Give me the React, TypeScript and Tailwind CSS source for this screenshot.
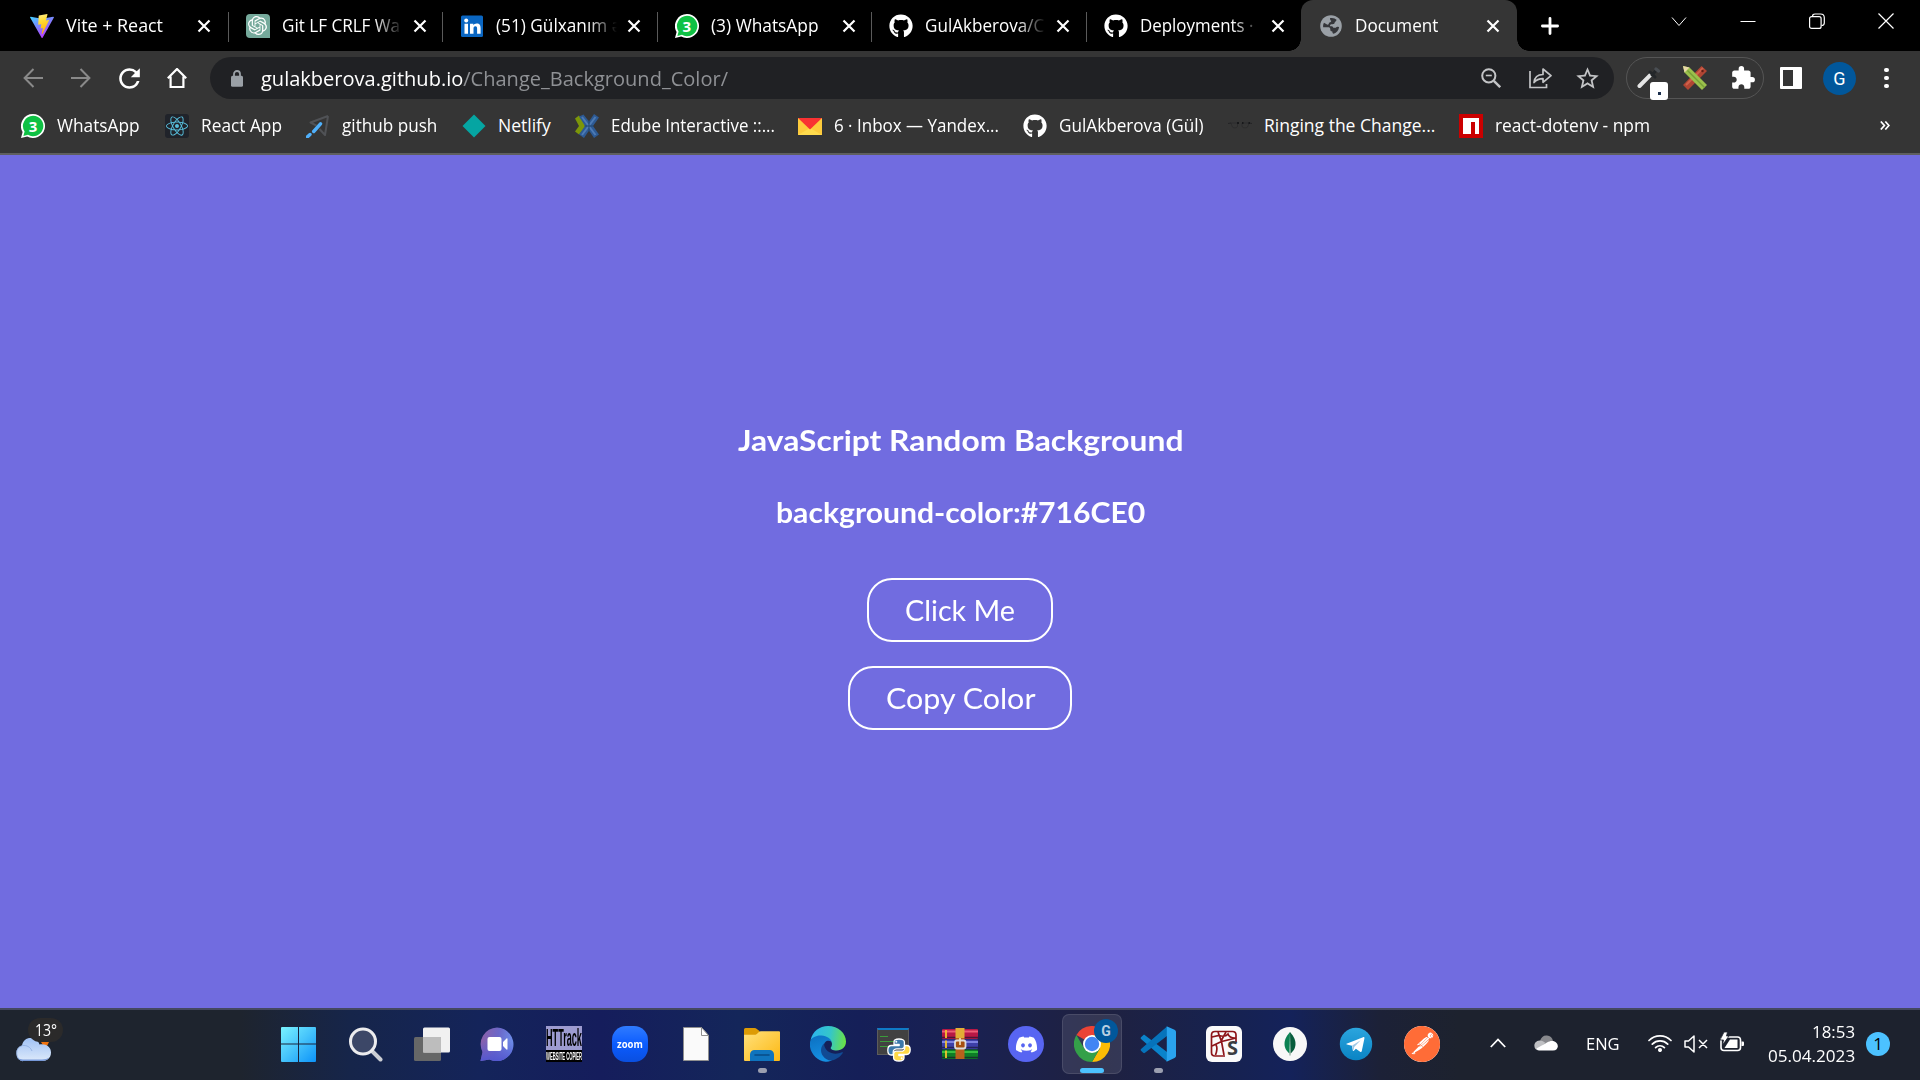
import React, { useLayoutEffect, useRef, useState } from "react";
import { FaGithub, FaDiscord, FaReact } from "react-icons/fa";
import { SiOpenai, SiPostman } from "react-icons/si";
import { MdExtension, MdRefresh, MdStarBorder } from "react-icons/md";

type Kids = { children: React.ReactNode };

/* One line of text, condensed or widened to the width of its box. */
function Fit({ children, className }: Kids & { className: string }) {
  const box = useRef<HTMLSpanElement>(null);
  const inner = useRef<HTMLSpanElement>(null);
  const [scale, setScale] = useState(1);
  useLayoutEffect(() => {
    if (box.current && inner.current) {
      setScale(box.current.offsetWidth / inner.current.offsetWidth);
    }
  }, []);
  return (
    <span ref={box} className={`block shrink-0 text-left whitespace-nowrap ${className}`}>
      <span ref={inner} className="inline-block origin-left" style={{ transform: `scaleX(${scale})` }}>
        {children}
      </span>
    </span>
  );
}

/* ---------- favicons ---------- */

const ViteIcon = () => (
  <svg viewBox="0 0 24 24" className="size-6">
    <defs>
      <linearGradient id="viteA" x1="0" y1="0" x2=".6" y2="1">
        <stop offset="0" stopColor="#41d1ff" />
        <stop offset="1" stopColor="#bd34fe" />
      </linearGradient>
      <linearGradient id="viteB" x1=".4" y1="0" x2=".6" y2="1">
        <stop offset="0" stopColor="#ffea83" />
        <stop offset=".3" stopColor="#ffdd35" />
        <stop offset="1" stopColor="#ffa800" />
      </linearGradient>
    </defs>
    <path d="M23.9 3.6 12.6 23.7a.6.6 0 0 1-1 0L.1 3.6c-.3-.5.1-1 .6-.9l11.300 2 11.100-2c.6-.1 1 .4.8.9z" fill="url(#viteA)" />
    <path d="M17.200 0 8.900 1.600a.3.3 0 0 0-.2.300l-.5 8.600c0 .2.200.4.400.3l2.300-.5c.2 0 .4.200.4.400l-.7 3.400c0 .2.200.4.400.4l1.400-.5c.3 0 .5.200.4.400l-1.100 5.300c0 .3.400.5.600.2l.1-.2 6.700-13.400c.1-.2-.1-.5-.4-.4l-2.400.5c-.2 0-.4-.2-.3-.4l1.500-5.400c.1-.3-.1-.5-.4-.4z" fill="url(#viteB)" />
  </svg>
);

const GptIcon = () => (
  <span className="flex size-6 items-center justify-center rounded-tl-[4px] rounded-tr-[4px] rounded-bl-[4px] bg-[#75a99b]">
    <SiOpenai className="size-[19px] text-white" />
  </span>
);

const LinkedinIcon = () => (
  <svg viewBox="0 0 24 24" className="size-6">
    <rect x="1" y="1.500" width="22" height="21.500" rx="1.500" fill="#0a66c2" />
    <g fill="#fff">
      <circle cx="6.200" cy="6.600" r="2" />
      <path d="M4.500 9.800H8v10H4.500zM10 9.800h3.300v1.500c.6-1.100 1.900-1.800 3.400-1.800 3.100 0 3.900 1.900 3.900 4.700v5.600h-3.500v-5c0-1.400-.2-2.500-1.700-2.500s-1.900 1.100-1.900 2.500v5H10z" />
    </g>
  </svg>
);

const WhatsappIcon = () => (
  <span className="relative block size-6">
    <svg viewBox="0 0 24 24" className="size-6">
      <path d="M12 0a12 12 0 1 1-5.800 22.500L0 24l1.600-6A12 12 0 0 1 12 0z" fill="#fff" />
      <path d="M12 1.800a10.200 10.200 0 1 1-5 19L2.400 22l1.200-4.500A10.200 10.200 0 0 1 12 1.800z" fill="#0fc144" />
    </svg>
    <span className="absolute inset-0 text-center font-['Open_Sans',sans-serif] text-[15px] leading-6 font-bold text-white">3</span>
  </span>
);

const GlobeIcon = () => (
  <svg viewBox="0 0 24 24" className="size-6">
    <circle cx="12" cy="12" r="10.800" fill="#9aa0a6" />
    <path d="M11 3.200c3-.6 5.600.2 7.400 2.200-1 .5-1 1.600-1.800 2.100-1 .6-.4 2-1.700 2.400-1.500.4-2.600-.3-3.600.6-.7.700-.4 1.700.5 1.700 1.500 0 2.500.3 2.700 1.800h2c1.500 0 1.400-1.400 2.600-1.300l1.900.3c-.3 3.500-2.800 6.700-6 7.600-1.200-.4-1.500-1.400-1.500-2.600-1.700 0-2.300-.9-2.300-2.500 0-1.300-1-2-2.300-2H3.300C3 11.500 3.400 9.800 4.200 8.400l3.900 2.200c1.500-.2 1.600-1.300 1.600-2.300 1.500 0 2.500-.8 2.600-2C11.300 6 10.700 4.300 11 3.200z" fill="#35363a" transform="translate(1.200 1.200) scale(.9)" />
  </svg>
);

const GithubIcon = () => <FaGithub className="size-6 text-white" />;

const ReactIcon = () => (
  <span className="flex size-6 items-center justify-center rounded-[3px] bg-[#20232a]">
    <FaReact className="size-[22px] text-[#61dafb]/85" />
  </span>
);

const PushIcon = () => (
  <svg viewBox="0 0 24 24" className="size-6" fill="none">
    <path d="M22 2 4.500 8.500l6 3.200M22 2l-3 19-5.500-6" stroke="#505256" strokeWidth="2" strokeLinejoin="round" />
    <path d="m14.500 9.800-6.800 7.700M4 20.500l-2.500 2.300" stroke="#4fb0fb" strokeWidth="3.400" strokeLinecap="round" />
  </svg>
);

const NetlifyIcon = () => (
  <svg viewBox="0 0 24 24" className="size-6">
    <path d="M12 .5 23.500 12 12 23.500.5 12z" fill="#05a5a2" />
  </svg>
);

const EdubeIcon = () => (
  <svg viewBox="0 0 24 24" className="size-6">
    <path d="M0 4.500 4 1.500l7 10.500-7 8.500-4-3L4 12z" fill="#7c9609" />
    <path d="m4 2.500 4.500-2L14 7.500 19 0l5 3.500L18 12l6 8.500-5 3.500-5-7.500L9 24l-5-3.500 6-8.500z" fill="#2d5a94" />
    <path d="M7 3 20.500 21M20.500 3 7 21" stroke="#4d7bb4" strokeWidth="2" />
    <path d="M14 6v12M9.500 12h9" stroke="#23466f" strokeWidth="1" />
  </svg>
);

const YandexIcon = () => (
  <svg viewBox="0 0 24 24" className="size-6">
    <path d="M0 4h24v17H0z" fill="#fdcb3c" />
    <path d="m0 21 12-7 12 7z" fill="#ffdb4d" />
    <path d="M0 4h24L12 15.500z" fill="#f93232" />
  </svg>
);

const GlassesIcon = () => (
  <svg viewBox="0 0 24 24" className="size-6" fill="none" stroke="#17181a">
    <path d="M0 9.500 3 9M21 9l3 .5" strokeWidth="1" opacity=".6" />
    <path d="M3 9h6.500v3c0 2.500-5.500 2.500-5.500 0zM14 9h7l-1 3c0 2.500-6 2.500-6 0z" strokeWidth=".6" opacity=".5" />
    <path d="M9 9h2M14 9h1.500M20.500 9H22" strokeWidth="1.800" />
  </svg>
);

const NpmIcon = () => (
  <svg viewBox="0 0 24 24" className="size-6">
    <path d="M0 0h24v24H0z" fill="#cb0000" />
    <path d="M4 4h16v16h-4V8h-4v12H4z" fill="#fff" />
  </svg>
);

/* ---------- tab strip ---------- */

const CloseX = () => (
  <svg viewBox="0 0 14 14" className="size-3.5" stroke="#fff" strokeWidth="2.200">
    <path d="m1.500 1.500 11 11M12.500 1.500l-11 11" />
  </svg>
);

type TabData = { icon: React.ReactNode; title: string; width: string; faded?: boolean };

const tabs: TabData[] = [
  { icon: <ViteIcon />, title: "Vite + React", width: "w-[97px]" },
  { icon: <GptIcon />, title: "Git LF CRLF Wa", width: "w-[118px]", faded: true },
  { icon: <LinkedinIcon />, title: "(51) Gülxanım ə", width: "w-[125px]", faded: true },
  { icon: <WhatsappIcon />, title: "(3) WhatsApp", width: "w-[108px]" },
  { icon: <GithubIcon />, title: "GulAkberova/C", width: "w-[119px]", faded: true },
  { icon: <GithubIcon />, title: "Deployments ·", width: "w-[113px]", faded: true },
];

function TabBody({ icon, title, width, faded }: TabData) {
  return (
    <>
      {icon}
      <div className={faded ? "mb-px ml-3 w-[121px] overflow-hidden [mask-image:linear-gradient(to_right,black_76%,transparent_100%)]" : "mb-px ml-3 w-[121px]"}>
        <Fit className={width}>{title}</Fit>
      </div>
      <div className="ml-2.5">
        <CloseX />
      </div>
    </>
  );
}

function TabStrip() {
  return (
    <div className="flex h-[51px] bg-black pl-[13px] text-[17.500px] leading-6 text-white">
      {tabs.map((t, i) => (
        <div key={t.title} className="relative flex w-[214.6px] shrink-0 items-center pl-[18px] first:pl-[17px]">
          {i > 0 && <div className="absolute top-3 left-0 h-[30px] w-px bg-[#5a5a5a]" />}
          <TabBody {...t} />
        </div>
      ))}
      <div className="relative flex w-[216px] shrink-0 items-center rounded-t-[12px] bg-[#353535] pl-[18px]">
        <div className="absolute bottom-0 -left-3 size-3 bg-[radial-gradient(circle_at_0_0,transparent_11.5px,#353535_12px)]" />
        <div className="absolute -right-3 bottom-0 size-3 bg-[radial-gradient(circle_at_100%_0,transparent_11.5px,#353535_12px)]" />
        <TabBody icon={<GlobeIcon />} title="Document" width="w-[83px]" />
      </div>
      <svg viewBox="0 0 18 18" className="mt-[17px] ml-[24px] size-[18px]" stroke="#fff" strokeWidth="2.800" strokeLinecap="round">
        <path d="M9 1.400v15.200M1.400 9h15.200" />
      </svg>
      <div className="mt-[13px] mr-[26px] ml-auto flex gap-[53px]">
        <svg viewBox="0 0 16 16" className="size-4" fill="none" stroke="#fff">
          <path d="m1 4.500 7 8 7-8" />
        </svg>
        <svg viewBox="0 0 16 16" className="size-4" stroke="#fff">
          <path d="M.5 8.500h15" />
        </svg>
        <svg viewBox="0 0 16 16" className="size-4" fill="none" stroke="#fff" strokeWidth="1.200">
          <rect x=".6" y="3.600" width="11.500" height="11.800" rx="2" />
          <path d="M3.500 3.500C3.500 1.500 4.500 1 6 1h5.500c3 0 3.800 1.500 3.800 3.800V10c0 1.800-.8 2.500-2.800 2.500" />
        </svg>
        <svg viewBox="0 0 16 16" className="size-4" stroke="#fff" strokeWidth="1.200">
          <path d="m.5.5 15 15M15.500.5l-15 15" />
        </svg>
      </div>
    </div>
  );
}

/* ---------- toolbar ---------- */

const ArrowIcon = ({ flip }: { flip?: boolean }) => (
  <svg viewBox="0 0 20 20" className={flip ? "size-5 -scale-x-100" : "size-5"} fill="none" stroke="#8a8a8a" strokeWidth="2">
    <path d="M20 10H2M10.500 1 1.600 10l8.900 9" />
  </svg>
);

function Toolbar() {
  return (
    <div className="flex h-[54px] items-center bg-[#353535] pl-[23px]">
      <ArrowIcon />
      <div className="ml-7">
        <ArrowIcon flip />
      </div>
      <MdRefresh className="ml-[23px] size-[31px] text-white" />
      <svg viewBox="0 0 20 20" className="ml-[22px] size-5" fill="none" stroke="#fff" strokeWidth="2.200">
        <path d="M.8 10.200 10 1l9.200 9.200M3.600 8.500V19h12.800V8.500" />
      </svg>

      <div className="ml-[23px] flex h-[42px] w-[1404px] items-center rounded-full bg-[#202124] pl-[21px]">
        <svg viewBox="0 0 12 17" className="h-[17px] w-3">
          <path d="M3 7V4a3 3 0 0 1 6 0v3" fill="none" stroke="#9aa0a6" strokeWidth="1.800" />
          <rect y="5.800" width="12" height="11" rx="1.500" fill="#9aa0a6" />
        </svg>
        <div className="mb-px ml-[18px] text-[20.500px] leading-[28px]">
          <Fit className="w-[467px] text-[#8f9195]">
            <span className="text-white">gulakberova.github.io</span>/Change_Background_Color/
          </Fit>
        </div>
        <svg viewBox="0 0 20 20" className="mr-[28px] ml-auto size-5" fill="none" stroke="#c3c4c6" strokeWidth="2">
          <circle cx="7.800" cy="7.800" r="6.600" />
          <path d="m12.800 12.800 6.400 6.400" strokeWidth="2.400" />
          <path d="M4.800 7.500h6" strokeWidth="1.600" />
        </svg>
        <svg viewBox="0 0 23 22" className="mr-[22px] h-[22px] w-[23px]" fill="none" stroke="#c3c4c6" strokeWidth="1.700">
          <path d="M1 4v16.500h16.500V17" />
          <path d="M5 15.500c.5-5 3.500-8 9-8V2l8 6.700-8 6.600v-3.700c-4 0-6.500.8-9 3.900z" strokeLinejoin="round" />
        </svg>
        <MdStarBorder className="mr-[13px] size-[27px] text-[#c3c4c6]" />
      </div>

      <div className="relative ml-3 flex h-[42px] w-[138px] items-center rounded-full border border-[#555] pl-2.5">
        <svg viewBox="0 0 24 24" className="size-6">
          <path d="M2.500 20 13.500 8.800" stroke="#e5e5e5" strokeWidth="4" strokeLinecap="round" />
          <path d="m13 6 5 5M15 9l4.500-5" stroke="#24272a" strokeWidth="3" strokeLinecap="round" />
          <path d="m19 3 2.500 2" stroke="#4a4e53" strokeWidth="3.500" strokeLinecap="round" />
        </svg>
        <svg viewBox="0 0 24 24" className="ml-[22px] size-6">
          <path d="M0 19 18.500 0 24 5 5 24z" fill="#b04533" />
          <path d="m3 19 17-17" stroke="#d0604b" strokeWidth="2" />
          <circle cx="19.500" cy="5" r="1.200" fill="#611d15" />
          <path d="M0 0 6.500 1.500 24 19l-5 5L1.500 6.500z" fill="#9bc04c" />
          <path d="m4.500 4.500 17 17" stroke="#77a035" strokeWidth="1.500" />
          <path d="m0 0 6.500 1.500-5 5z" fill="#e9d8a8" />
        </svg>
        <MdExtension className="ml-[23px] size-[26px] text-white" />
        <div className="absolute top-6 left-[23px] flex h-[18px] w-[18px] items-center justify-center rounded-[3px] bg-white">
          <div className="mt-1 size-[3px] bg-[#1b2f4d]" />
        </div>
      </div>

      <div className="ml-4 flex h-[22px] w-[22px] rounded-[1px] border-[3px] border-white">
        <div className="ml-auto w-[6px] bg-white" />
      </div>
      <div className="ml-[21px] flex size-[33px] items-center justify-center rounded-full bg-[#01579b] font-['Roboto',sans-serif] text-[18px] text-white">
        G
      </div>
      <div className="ml-[28px] flex flex-col gap-[3.500px]">
        <div className="size-[4.500px] rounded-full bg-white" />
        <div className="size-[4.500px] rounded-full bg-white" />
        <div className="size-[4.500px] rounded-full bg-white" />
      </div>
    </div>
  );
}

/* ---------- bookmarks ---------- */

const bookmarks = [
  { icon: <WhatsappIcon />, title: "WhatsApp", width: "w-[83px]", slot: "w-[144px]" },
  { icon: <ReactIcon />, title: "React App", width: "w-[81px]", slot: "w-[141px]" },
  { icon: <PushIcon />, title: "github push", width: "w-[95px]", slot: "w-[156px]" },
  { icon: <NetlifyIcon />, title: "Netlify", width: "w-[53px]", slot: "w-[113px]" },
  { icon: <EdubeIcon />, title: "Edube Interactive ::...", width: "w-[164px]", slot: "w-[223px]" },
  { icon: <YandexIcon />, title: "6 · Inbox — Yandex...", width: "w-[165px]", slot: "w-[225px]" },
  { icon: <GithubIcon />, title: "GulAkberova (Gül)", width: "w-[145px]", slot: "w-[205px]" },
  { icon: <GlassesIcon />, title: "Ringing the Change...", width: "w-[171px]", slot: "w-[231px]" },
  { icon: <NpmIcon />, title: "react-dotenv - npm", width: "w-[155px]", slot: "w-[216px]" },
];

function Bookmarks() {
  return (
    <div className="flex h-[50px] items-center border-b-2 border-[#5f5f5f] bg-[#353535] pb-[7px] pl-[21px] text-[17.500px] leading-6 text-white">
      {bookmarks.map((b) => (
        <div key={b.title} className={`flex shrink-0 items-center gap-3 ${b.slot}`}>
          {b.icon}
          <div className="mb-px">
            <Fit className={b.width}>{b.title}</Fit>
          </div>
        </div>
      ))}
      <svg viewBox="0 0 10 9" className="mr-[30px] ml-auto h-[9px] w-[10px]" fill="none" stroke="#fff" strokeWidth="1.700">
        <path d="m.8.500 3.600 4-3.600 4M5.300.500l3.600 4-3.600 4" />
      </svg>
    </div>
  );
}

/* ---------- taskbar ---------- */

const Start = () => (
  <svg viewBox="0 0 36 36" className="size-9 -translate-x-0.5">
    <defs>
      <linearGradient id="win" gradientUnits="userSpaceOnUse" x1="1" y1="1" x2="36" y2="36">
        <stop offset="0" stopColor="#7af3ff" />
        <stop offset=".5" stopColor="#46c4fb" />
        <stop offset="1" stopColor="#0c93f9" />
      </linearGradient>
    </defs>
    <path d="M2 1h16v16.500H1V2a1 1 0 0 1 1-1zM19 1h16a1 1 0 0 1 1 1v15.500H19zM1 18.500h17V36H2a1 1 0 0 1-1-1zM19 18.500h17V35a1 1 0 0 1-1 1H19z" fill="url(#win)" />
  </svg>
);

const Search = () => (
  <svg viewBox="0 0 36 36" className="size-9 -translate-x-px">
    <path d="m25 25 8.500 8.500" stroke="#ccced4" strokeWidth="4" strokeLinecap="round" />
    <circle cx="16" cy="15.500" r="12.500" fill="#3c4767" stroke="#ececee" strokeWidth="3" />
  </svg>
);

const TaskView = () => (
  <svg viewBox="0 0 36 36" className="size-9">
    <rect x="0" y="11" width="27" height="24" rx="1.500" fill="#666767" />
    <rect x="9" y="1.500" width="27" height="25" rx="1.500" fill="#f1f1f1" />
    <path d="M9 11h18v15.500H9z" fill="#bdbdbd" />
  </svg>
);

const Chat = () => (
  <svg viewBox="0 0 36 36" className="size-9 -translate-x-px">
    <defs>
      <linearGradient id="chat" x1="0" y1=".3" x2="1" y2=".5">
        <stop offset="0" stopColor="#8c5fa8" />
        <stop offset=".5" stopColor="#6b67c8" />
        <stop offset="1" stopColor="#6d90ec" />
      </linearGradient>
      <linearGradient id="chatB" x1="0" y1="0" x2="0" y2="1">
        <stop offset=".4" stopColor="#5b5bd0" stopOpacity="0" />
        <stop offset="1" stopColor="#5357cf" />
      </linearGradient>
    </defs>
    <path d="M18 1.500a16.800 16.800 0 1 1-7.500 32L1.500 35l2-9A16.800 16.800 0 0 1 18 1.500z" fill="url(#chat)" />
    <path d="M18 1.500a16.800 16.800 0 1 1-7.500 32L1.500 35l2-9A16.800 16.800 0 0 1 18 1.500z" fill="url(#chatB)" />
    <rect x="8.500" y="11" width="14" height="14" rx="2" fill="#fff" />
    <path d="m24 16 3.500-3.500c.6-.6 1-.3 1 .4v10.200c0 .7-.4 1-1 .4L24 20z" fill="#fff" />
  </svg>
);

const Httrack = () => (
  <div className="flex size-9 flex-col overflow-hidden bg-[#9d9bd0]">
    <div className="h-6 text-center font-['Liberation_Sans',sans-serif] text-black">
      <Fit className="w-9 text-[23px] leading-6 font-bold">HTTrack</Fit>
    </div>
    <div className="h-3 bg-black font-['Liberation_Sans',sans-serif] text-white">
      <Fit className="w-9 text-[11px] leading-3 font-bold">WEBSITE COPIER</Fit>
    </div>
  </div>
);

const Zoom = () => (
  <div className="flex size-9 items-center justify-center rounded-[14px] bg-gradient-to-b from-[#2f7bff] via-[#0b5cff] to-[#0a4fe0] pb-px font-['Open_Sans',sans-serif] text-white">
    <Fit className="w-[26px] text-[11px] leading-3 font-bold">zoom</Fit>
  </div>
);

const FileIcon = () => (
  <svg viewBox="0 0 36 36" className="size-9">
    <path d="M5.500 1.500h18l7 8v25h-25z" fill="#fafafa" stroke="#8f8f8f" />
    <path d="M23.500 1.500v8h7z" fill="#fff" stroke="#8f8f8f" />
  </svg>
);

const Folder = () => (
  <svg viewBox="0 0 36 36" className="size-9">
    <defs>
      <linearGradient id="fold" x1="0" y1="0" x2="1" y2="1">
        <stop offset="0" stopColor="#ffe17c" />
        <stop offset="1" stopColor="#fdb812" />
      </linearGradient>
    </defs>
    <path d="M0 3.500A1.500 1.500 0 0 1 1.500 2h9c1 0 1.700.3 2.300 1L15.500 5v5H0z" fill="#dd9b05" />
    <path d="M0 8.800h10.500c1.300 0 2-.4 2.900-1.300l1.300-1.300c.6-.6 1.200-.9 2.200-.9H35a1 1 0 0 1 1 1V34a1 1 0 0 1-1 1H1a1 1 0 0 1-1-1z" fill="url(#fold)" />
    <path d="M6 35v-6.500a4.500 4.500 0 0 1 4.500-4.500h15a4.500 4.500 0 0 1 4.500 4.500V35z" fill="#0f74be" />
    <path d="M11 29h14" stroke="#084b86" strokeWidth="1.600" strokeLinecap="round" />
  </svg>
);

const Edge = () => (
  <svg viewBox="0 0 36 36" className="size-9">
    <defs>
      <linearGradient id="edgeA" x1="0" y1=".4" x2="1" y2=".5">
        <stop offset="0" stopColor="#2bb4ee" />
        <stop offset=".55" stopColor="#35c6c8" />
        <stop offset="1" stopColor="#6ae245" />
      </linearGradient>
      <linearGradient id="edgeB" x1="0" y1="0" x2=".3" y2="1">
        <stop offset="0" stopColor="#0c6fc0" />
        <stop offset="1" stopColor="#1590e3" />
      </linearGradient>
    </defs>
    <path d="M.6 14C2.500 5.500 9.500 0 18 0c10.500 0 18 7.500 18 15.500 0 5.500-4 9-9.300 9-4.200 0-6-1.500-6-2.500 0-.8 1.300-1.500 1.300-4 0-3.500-4-7-9.500-7C6.500 11 2 13 .6 14z" fill="url(#edgeA)" />
    <path d="M.4 14.500C2 11.500 6.500 9 11.500 9.500c5.500.5 9.700 3.500 10.300 6.500-3-2.500-8-1.500-8 4.500 0 7 5.500 11.500 11 11.200C22 34.500 19 36.200 15.500 35.800 6.500 35-1.500 26-.0 16z" fill="url(#edgeB)" />
    <path d="M14 17.500c-3.500 3-4 8.500-1 12.500 3 4.300 8 5.600 12 3.500 3-1.300 6-3.500 7.800-6.500.4-.7-.2-1-.8-.7-6.500 3.200-17.500 1.200-18-8.800z" fill="#114a93" />
  </svg>
);

const PythonIdle = () => (
  <div className="relative size-9">
    <div className="ml-px h-[27px] w-8 translate-y-0.5 border border-[#5c5c5c] border-t-2 border-t-[#0f7ac6] bg-[#414141] pt-[6px] pl-[2px]">
      <div className="h-px w-2 bg-[#3b9b3b]" />
      <div className="mt-[4px] h-px w-4 bg-[#3b9b3b]" />
      <div className="mt-[4px] h-px w-3 bg-[#3b9b3b]" />
    </div>
    <svg viewBox="0 0 24 24" className="absolute top-3 left-[11px] size-6">
      <g stroke="#fff" strokeWidth="1.300" strokeLinejoin="round">
        <path d="M11.900 1C8.500 1 7 2 7 4v2.500h5.200v1H4.500C2 7.500.8 9.500.8 12.200S2 17 4.200 17h2v-2.700c0-2 1.600-3.500 3.500-3.500h5c1.600 0 2.700-1.300 2.700-2.800V4c0-2-2-3-5.500-3z" fill="#3c78aa" />
        <path d="M12.100 23c3.400 0 4.900-1 4.900-3v-2.500h-5.200v-1h7.700c2.500 0 3.700-2 3.700-4.700S22 7.500 19.800 7.500h-2v2.200c0 2-1.600 3.500-3.500 3.500h-5c-1.600 0-2.700 1.300-2.700 2.800v4c0 2 2 3 5.500 3z" fill="#ffd845" />
      </g>
      <circle cx="9.300" cy="3.800" r="1" fill="#fff" />
      <circle cx="14.700" cy="20.200" r="1" fill="#fff" />
    </svg>
  </div>
);

const Winrar = () => (
  <svg viewBox="0 0 36 36" className="size-9">
    <rect y="3" width="36" height="10" rx="1" fill="#b71845" />
    <rect y="13.500" width="36" height="9.500" rx="1" fill="#3d3fa8" />
    <rect y="23.500" width="36" height="9.500" rx="1" fill="#0d7d26" />
    <path d="M0 5.500h36" stroke="#ed5d76" strokeWidth="2" />
    <path d="M0 16h36" stroke="#7d82e0" strokeWidth="2" />
    <path d="M0 26h36" stroke="#36bd42" strokeWidth="2" />
    <path d="M0 11.500h36M0 21.500h36M0 31.500h36" stroke="#17142c" strokeWidth="1.500" opacity=".65" />
    <path d="M4 4v8M4 14.500v7.500M4 24.500v7.500" stroke="#f4c32e" strokeWidth="1.800" />
    <path d="M13.500 2h9v10h-9z" fill="#e2ae35" />
    <path d="M13.500 12h9v21h-9z" fill="#b6611c" />
    <rect x="13" y="14.500" width="10.500" height="8" rx="2" fill="#a65010" stroke="#dcdcdc" strokeWidth="1.800" />
    <path d="M18 12v7" stroke="#f2e4c0" strokeWidth="1.600" />
  </svg>
);

const Discord = () => (
  <div className="flex size-9 items-center justify-center rounded-full bg-[#5865f2]">
    <FaDiscord className="size-[23px] text-white" />
  </div>
);

const Chrome = () => (
  <div className="relative size-9">
    <svg viewBox="0 0 36 36" className="size-9">
      <path d="M18 18 2.400 9A18 18 0 0 1 33.600 9z" fill="#ea4335" />
      <path d="M18 9h15.600A18 18 0 0 1 18 36l7.800-13.500z" fill="#fbbc05" />
      <path d="m25.800 22.500-7.800 13.500A18 18 0 0 1 2.400 9l7.800 13.500z" fill="#34a049" />
      <circle cx="18" cy="18" r="9" fill="#fff" />
      <circle cx="18" cy="18" r="7.200" fill="#4285f4" />
    </svg>
    <div className="absolute -top-[7px] left-5 flex size-6 items-center justify-center rounded-full bg-[#01579b] font-['Roboto',sans-serif] text-[14px] font-bold text-[#b9cfe2]">
      G
    </div>
  </div>
);

const VsCode = () => (
  <svg viewBox="0 0 36 36" className="size-9">
    <path d="M1 11.300 3.200 9.200c.5-.4 1.200-.5 1.800 0L27 26v9.500L1 13c-.5-.5-.5-1.200 0-1.700z" fill="#0a83cb" />
    <path d="m1 24.700 2.200 2.100c.5.400 1.200.5 1.800 0L27 10V.4L1 23c-.5.500-.5 1.200 0 1.700z" fill="#0673bb" />
    <path d="M26 0c.6 0 .8.500.8 1v34c0 .5-.3 1-.8 1l8.500-4c1-.5 1.500-1.200 1.500-2.200V6.200C36 5.200 35.500 4.300 34.500 3.800z" fill="#2aa3ee" />
  </svg>
);

const Spyder = () => (
  <div className="relative size-9 rounded-[6px] bg-[#fafafa]">
    <svg viewBox="0 0 36 36" className="size-9" fill="none" stroke="#8d1519" strokeWidth="1.700">
      <path d="M19 30H9c-2.500 0-3.500-1-3.500-3.500V9c0-2.500 1-3.500 3.500-3.500h17.500c2.500 0 3.500 1 3.500 3.500v7" />
      <path d="M12 6l3.500 9.500L30 12M15.500 15.500 6 20M15.500 15.500 18 29M20 6l-5 9M6 11l7-1.500c3 1 7 1 9-1.500 1 3 4 4 7 4M10 19c2 3 1 6-.5 10" />
    </svg>
    <span className="absolute right-1 bottom-0.5 font-['Open_Sans',sans-serif] text-[20px] leading-6 font-bold text-[#3b3d40]">S</span>
  </div>
);

const Mongo = () => (
  <svg viewBox="0 0 36 36" className="size-9">
    <circle cx="18" cy="18" r="17" fill="#f7f7f7" />
    <path d="M18 6c-4 4.500-5.500 8-5.500 12 0 4.500 2.500 7.500 5 9.500z" fill="#0b8152" />
    <path d="M18 6c4 4.500 5.500 8 5.500 12 0 4.500-2.500 7.500-5 9.500z" fill="#075c3c" />
    <path d="M18 25v4.500" stroke="#739b88" strokeWidth="1" />
  </svg>
);

const Telegram = () => (
  <svg viewBox="0 0 36 36" className="size-9">
    <defs>
      <linearGradient id="tg" x1="0" y1="0" x2="0" y2="1">
        <stop offset="0" stopColor="#2ba5de" />
        <stop offset="1" stopColor="#0a84c4" />
      </linearGradient>
    </defs>
    <circle cx="18" cy="18" r="16.200" fill="url(#tg)" />
    <path d="m8.500 17.700 16.600-6.500c.9-.3 1.500.2 1.300 1.300l-2.600 12.600c-.2 1-.9 1.200-1.700.7l-4.200-3-2 2c-.5.500-1 .4-1.100-.3l-.8-4.800-5-1.300c-.9-.1-.9-.4-.5-.7z" fill="#fff" />
    <path d="m14.200 19.500 8.500-5.300-6.500 6.700-.7 3.800z" fill="#9fc9e6" />
  </svg>
);

const Postman = () => (
  <div className="flex size-9 items-center justify-center rounded-full bg-white">
    <SiPostman className="size-9 text-[#ff6c37]" />
  </div>
);

const apps = [
  { name: "start", icon: <Start /> },
  { name: "search", icon: <Search /> },
  { name: "taskview", icon: <TaskView /> },
  { name: "chat", icon: <Chat /> },
  { name: "httrack", icon: <Httrack /> },
  { name: "zoom", icon: <Zoom /> },
  { name: "file", icon: <FileIcon /> },
  { name: "folder", icon: <Folder />, running: true },
  { name: "edge", icon: <Edge /> },
  { name: "python", icon: <PythonIdle /> },
  { name: "winrar", icon: <Winrar /> },
  { name: "discord", icon: <Discord /> },
  { name: "chrome", icon: <Chrome />, active: true },
  { name: "vscode", icon: <VsCode />, running: true },
  { name: "spyder", icon: <Spyder /> },
  { name: "mongo", icon: <Mongo /> },
  { name: "telegram", icon: <Telegram /> },
  { name: "postman", icon: <Postman /> },
];

function Taskbar() {
  return (
    <div className="flex h-[72px] items-center border-t-2 border-[#444860] bg-[linear-gradient(90deg,#1e242e_0,#1e242e_240px,#16254a_350px,#14245a_480px,#151d5c_600px,#14265a_740px,#151f58_860px,#1a2150_980px,#1f2140_1100px,#17224f_1220px,#14225a_1290px,#1c2137_1380px,#1d222e_1460px)] text-[17px] text-white">
      <div className="relative h-full w-[267px]">
        <svg viewBox="0 0 36 28" className="absolute top-6 left-[15px] h-7 w-9">
          <defs>
            <linearGradient id="cloud" x1="0" y1="0" x2="0" y2="1">
              <stop offset="0" stopColor="#9fc1f5" />
              <stop offset="1" stopColor="#dce9fa" />
            </linearGradient>
          </defs>
          <path d="M26 8h8l-2 4-3 1z" fill="#f0730f" />
          <path d="M8 27a8 8 0 0 1-1-15.500C8 6 12 3.500 16.500 4c4 .4 7 3 8 6.500C31 9.500 36 13 36 18.500S32 27 27 27z" fill="url(#cloud)" />
          <path d="M8 27a8 8 0 0 1-.5-15.500c4-.5 8 1.500 9.500 5.500" fill="none" stroke="#8cabe0" strokeWidth=".8" />
          <path d="M2 23.500c1.500 2.300 3.500 3.500 6 3.500h19c3.500 0 6-1.200 7.500-3.500-2 1.300-4.500 2-7.500 2H8c-2.500 0-4.500-.7-6-2z" fill="#7698d8" />
        </svg>
        <div className="absolute top-2 left-[28px] flex h-6 w-[35px] items-center justify-center rounded-full bg-[#2b2a2a] text-[16px]">
          <Fit className="w-[22px] leading-5">13°</Fit>
        </div>
      </div>
      <div className="flex h-full">
        {apps.map((a) => (
          <div key={a.name} className="flex h-full w-[66px] justify-center">
            <div
              className={
                a.active
                  ? "relative mt-1 flex h-[60px] w-[60px] justify-center rounded-[7px] border border-white/10 bg-white/10 pt-[11px]"
                  : "relative mt-1 flex h-[60px] w-[60px] justify-center pt-3"
              }
            >
              {a.icon}
              {a.running && <div className="absolute bottom-px left-[25.500px] h-[5px] w-[9px] rounded-full bg-[#9b9fb0]" />}
              {a.active && <div className="absolute bottom-0 left-[17px] h-[5px] w-6 rounded-full bg-[#4cc2ff]" />}
            </div>
          </div>
        ))}
      </div>
      <svg viewBox="0 0 16 10" className="mb-1 ml-[35px] h-[10px] w-4" fill="none" stroke="#fff" strokeWidth="1.800">
        <path d="m.8 9 7.200-7.500L15.200 9" />
      </svg>
      <svg viewBox="0 0 24 16" className="mb-1 ml-[28px] h-4 w-6">
        <path d="M6 6c1-4 4-6 7-5.500 3 .3 5.500 2 6 5.500L12 9z" fill="#88898d" />
        <path d="M5 15.500C-1.500 15-1 6 5.500 5.500c3 0 4 1 6 2.500L4 15z" fill="#bfc0c3" />
        <path d="M2.500 13.500 13 7.500c2-1 3-1.500 5-1.500 7 0 8 9.500 1 9.500H6c-1.500 0-3-.5-3.500-2z" fill="#fff" />
      </svg>
      <Fit className="mb-0.5 ml-[28px] w-[34px] leading-6">ENG</Fit>
      <svg viewBox="0 0 24 18" className="mb-1 ml-[28px] h-[18px] w-6" fill="none" stroke="#fff" strokeWidth="1.700" strokeLinecap="round">
        <path d="M1 6.500a15.500 15.500 0 0 1 22 0M4.300 10.200a10.800 10.800 0 0 1 15.400 0M7.600 13.600a6.200 6.200 0 0 1 8.800 0" />
        <circle cx="12" cy="16" r="1.200" fill="#fff" />
      </svg>
      <svg viewBox="0 0 24 18" className="mb-0.5 ml-3 h-[18px] w-6" fill="none" stroke="#fff" strokeWidth="1.500" strokeLinejoin="round">
        <path d="M1 6h3.500L10 1v16l-5.500-5H1zM15 5l8 8M23 5l-8 8" />
      </svg>
      <svg viewBox="0 0 24 20" className="mb-1.5 ml-3 h-5 w-6">
        <rect x="1" y="5" width="19.500" height="13.500" rx="3" fill="none" stroke="#fff" strokeWidth="1.600" />
        <path d="M21.500 9.500h1.200c.8 0 1.300.5 1.300 1.200v2c0 .8-.5 1.300-1.300 1.300h-1.200z" fill="#fff" />
        <path d="M10 7.500h7.500V16H4.500z" fill="#fff" />
        <path d="M4 0h3.500L6.500 4H9l-6.500 9 1-5H0z" fill="#fff" stroke="#1d222e" strokeWidth=".8" />
      </svg>
      <div className="mb-[3px] ml-auto flex flex-col items-end text-[16.500px] leading-6">
        <Fit className="w-[43px]">18:53</Fit>
        <Fit className="w-[87px]">05.04.2023</Fit>
      </div>
      <div className="mr-[30px] mb-0.5 ml-[11px] flex size-6 items-center justify-center rounded-full bg-[#4cc2ff] text-[17px] text-black">1</div>
    </div>
  );
}

/* ---------- page ---------- */

export default function App() {
  return (
    <div className="flex h-[1080px] w-[1920px] flex-col overflow-hidden bg-black font-['Open_Sans','Noto_Sans',sans-serif]">
      <TabStrip />
      <Toolbar />
      <Bookmarks />
      <main className="flex flex-1 flex-col items-center bg-[#716ce0] pt-[267px] font-['Lato',sans-serif] text-white">
        <h1 className="text-[28px] leading-9 font-bold">
          <Fit className="w-[445px]">JavaScript Random Background</Fit>
        </h1>
        <h2 className="mt-9 text-[28px] leading-9 font-bold">
          <Fit className="w-[369px]">background-color:#716CE0</Fit>
        </h2>
        <button className="mt-12 flex h-16 w-[186px] items-center justify-center rounded-[25px] border-2 border-white">
          <Fit className="w-[110px] text-[29px] leading-9">Click Me</Fit>
        </button>
        <button className="mt-6 flex h-16 w-[224px] items-center justify-center rounded-[25px] border-2 border-white">
          <Fit className="w-[149px] text-[29px] leading-9">Copy Color</Fit>
        </button>
      </main>
      <Taskbar />
    </div>
  );
}
